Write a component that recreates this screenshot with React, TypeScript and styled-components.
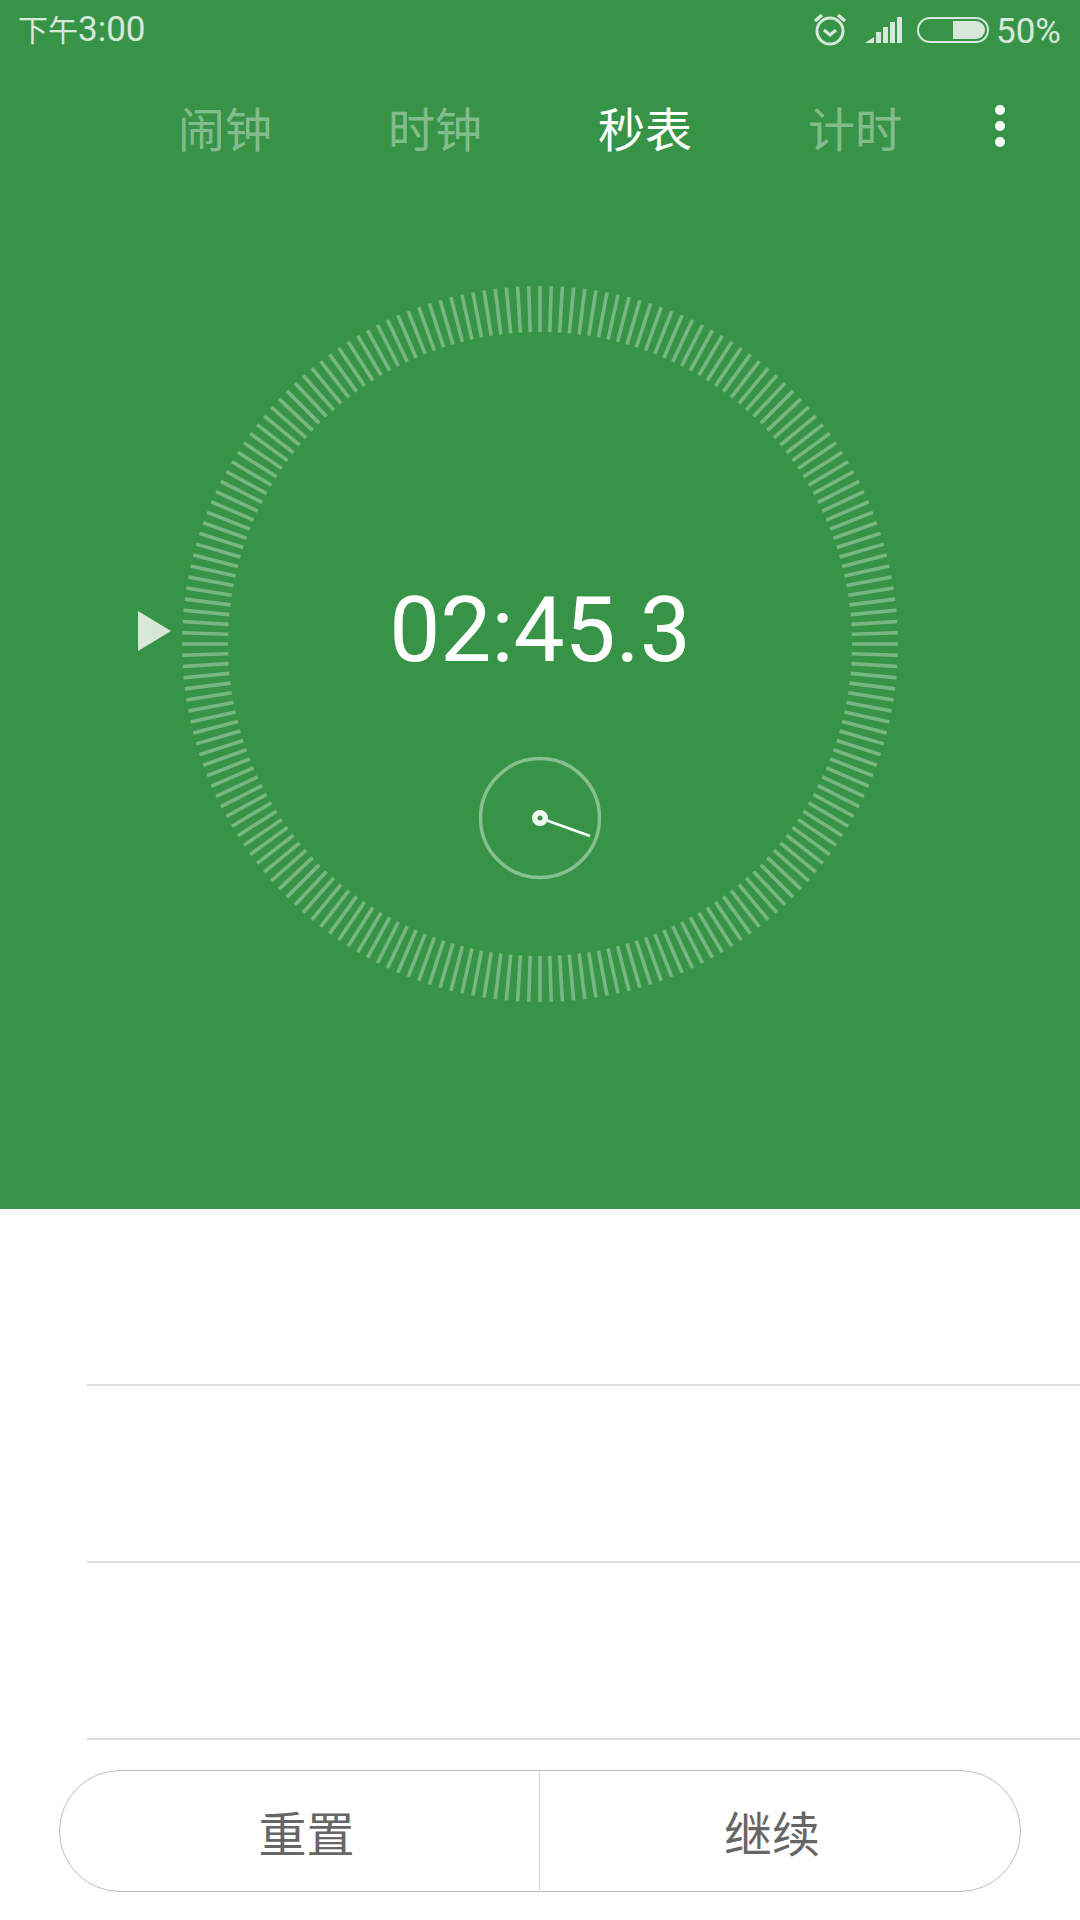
import { createGlobalStyle, styled } from "styled-components";

const TABS = ["闹钟", "时钟", "秒表", "计时"];
const ACTIVE_TAB = 2;
const TICK_COUNT = 200;
const LAP_ROWS = [0, 1, 2];

function AlarmIcon() {
  return (
    <AlarmSvg width="34" height="34" viewBox="0 0 34 34" fill="none" stroke="#d7e8db">
      <circle cx="17" cy="19" r="13" strokeWidth="3" />
      <path d="M11 18l6 5 6-5" strokeWidth="3" />
      <path d="M2 9l7-6M32 9l-7-6" strokeWidth="3.4" />
    </AlarmSvg>
  );
}

function SignalIcon() {
  return (
    <svg width="38" height="26" viewBox="0 0 38 26" fill="#d7e8db">
      <path d="M0 26l9-6v6z" />
      <rect x="11" y="15" width="5" height="11" />
      <rect x="18" y="10" width="5" height="16" />
      <rect x="25" y="5" width="5" height="21" />
      <rect x="32" y="0" width="5" height="26" />
    </svg>
  );
}

function BatteryIcon() {
  return (
    <svg width="72" height="26" viewBox="0 0 72 26" fill="none">
      <rect x="1" y="1" width="70" height="24" rx="12" stroke="#d7e8db" strokeWidth="2" />
      <path d="M36 4h23a9 9 0 0 1 0 18H36z" fill="#d7e8db" />
    </svg>
  );
}

function DialFace() {
  const c = 358;
  return (
    <DialSvg width="716" height="716" viewBox="0 0 716 716">
      {Array.from({ length: TICK_COUNT }, (_, i) => (
        <line
          key={i}
          x1={c}
          y1="0"
          x2={c}
          y2="46"
          stroke="#fff"
          strokeOpacity="0.33"
          strokeWidth="3.6"
          transform={`rotate(${(i * 360) / TICK_COUNT} ${c} ${c})`}
        />
      ))}
      <path d="M-44 325l33 20-33 20z" fill="#d7e8db" />
      <circle cx={c} cy="532" r="59.5" fill="none" stroke="#fff" strokeOpacity="0.4" strokeWidth="3.5" />
      <line x1={c} y1="532" x2="408" y2="550" stroke="#fff" strokeWidth="2.5" />
      <circle cx={c} cy="532" r="5.25" fill="#379447" stroke="#f0f7f1" strokeWidth="5.5" />
    </DialSvg>
  );
}

export default function App() {
  return (
    <>
      <GlobalStyle />
      <Page>
        <Header>
          <StatusBar>
            <StatusText>
              <StatusCjk>下午</StatusCjk>3:00
            </StatusText>
            <StatusRight>
              <AlarmIcon />
              <SignalIcon />
              <BatteryIcon />
              <BatteryText>50%</BatteryText>
            </StatusRight>
          </StatusBar>
          <TabBar>
            {TABS.map((tab, i) => (
              <Tab key={tab} $active={i === ACTIVE_TAB}>
                {tab}
              </Tab>
            ))}
            <MoreButton>
              <Dot />
              <Dot />
              <Dot />
            </MoreButton>
          </TabBar>
          <Dial>
            <DialFace />
            <TimeLabel>02:45.3</TimeLabel>
          </Dial>
        </Header>
        <LapList>
          {LAP_ROWS.map((row) => (
            <LapRow key={row} />
          ))}
        </LapList>
        <Actions>
          <ActionButton>重置</ActionButton>
          <ActionButton>继续</ActionButton>
        </Actions>
      </Page>
    </>
  );
}

const GlobalStyle = createGlobalStyle`
  html, body {
    margin: 0;
    padding: 0;
    background: #fff;
  }
  * {
    box-sizing: border-box;
  }
`;

const Page = styled.div`
  width: 1080px;
  height: 1920px;
  overflow: hidden;
  font-family: Roboto, "Noto Sans CJK SC", sans-serif;
`;

const Header = styled.div`
  height: 1209px;
  background-color: #379447;
`;

const StatusBar = styled.div`
  height: 60px;
  padding: 0 19px 0 18px;
  display: flex;
  align-items: center;
  justify-content: space-between;
`;

const StatusText = styled.span`
  font-size: 35px;
  font-weight: 400;
  color: #d7e8db;
  margin-top: -5px;
`;

const StatusCjk = styled.span`
  font-size: 30px;
`;

const StatusRight = styled.div`
  display: flex;
  align-items: center;
  gap: 14px;
`;

const AlarmSvg = styled.svg`
  margin-right: 4px;
  margin-top: -2px;
`;

const BatteryText = styled(StatusText)`
  margin-left: -7px;
  margin-top: 2px;
`;

const TabBar = styled.div`
  height: 133px;
  padding-left: 120px;
  display: flex;
  align-items: center;
`;

const Tab = styled.div<{ $active: boolean }>`
  width: 210px;
  text-align: center;
  font-size: 47px;
  font-weight: 400;
  color: ${(p) => (p.$active ? "#fff" : "rgba(255, 255, 255, 0.4)")};
`;

const MoreButton = styled.div`
  margin-left: 30px;
  margin-top: -2px;
  width: 20px;
  display: flex;
  flex-direction: column;
  align-items: center;
  gap: 6px;
`;

const Dot = styled.span`
  width: 10px;
  height: 10px;
  border-radius: 50%;
  background: #fff;
`;

const Dial = styled.div`
  position: relative;
  width: 716px;
  height: 716px;
  margin: 93px auto 0;
`;

const DialSvg = styled.svg`
  display: block;
  overflow: visible;
`;

const TimeLabel = styled.div`
  position: absolute;
  left: 0;
  right: 0;
  top: 284px;
  text-align: center;
  font-size: 91px;
  line-height: 120px;
  font-weight: 400;
  color: #fff;
`;

const LapList = styled.div`
  padding-left: 87px;
`;

const LapRow = styled.div`
  height: 177px;
  border-bottom: 2px solid #dedede;
`;

const Actions = styled.div`
  width: 962px;
  height: 122px;
  margin: 30px auto 0;
  display: flex;
  border: 1px solid #bdbdbd;
  border-radius: 61px;
  overflow: hidden;
`;

const ActionButton = styled.div`
  width: 480px;
  display: flex;
  align-items: center;
  justify-content: center;
  font-size: 48px;
  font-weight: 400;
  color: #666;
  &:first-child {
    border-right: 1px solid #d5d5d5;
    padding-left: 14px;
  }
  &:last-child {
    padding-right: 16px;
  }
`;
